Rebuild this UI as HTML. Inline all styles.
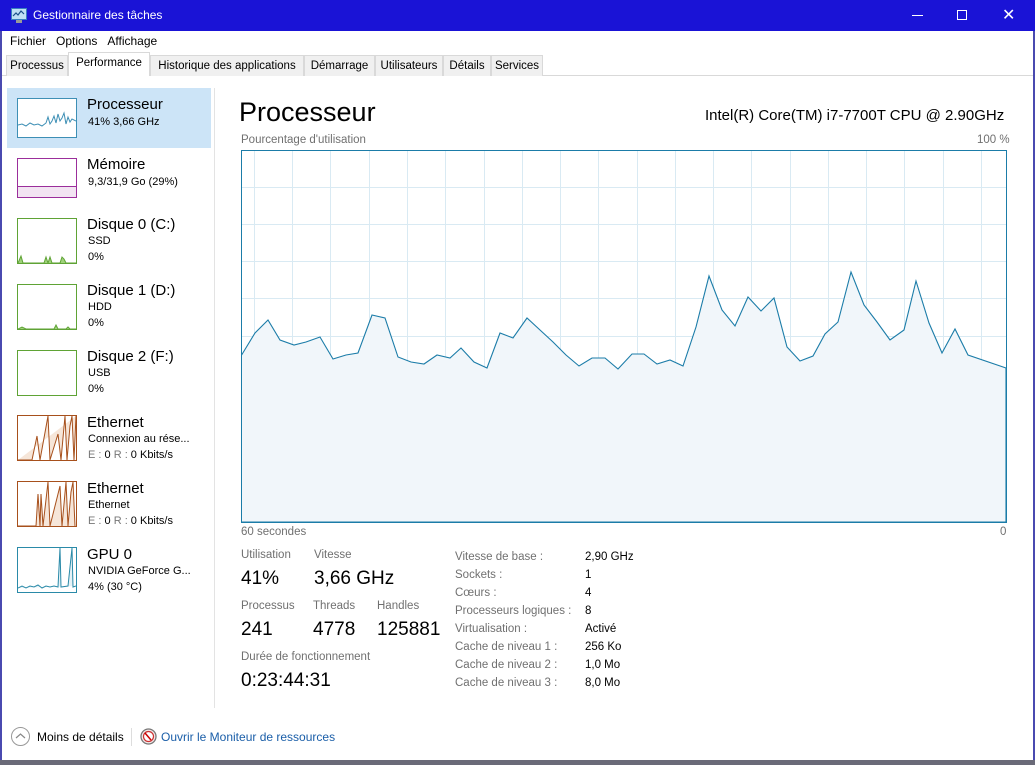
<!DOCTYPE html>
<html><head><meta charset="utf-8"><style>
*{margin:0;padding:0;box-sizing:border-box}
body{width:1035px;height:765px;overflow:hidden;background:#fff;font-family:"Liberation Sans",sans-serif;position:relative;color:#000}
.a{position:absolute;white-space:nowrap}
.title{left:0;top:0;width:1035px;height:31px;background:#1a13d6;color:#fff;font-size:12px}
.g{color:#777}
.tab{position:absolute;top:55px;height:21px;font-size:11.5px;line-height:20px;text-align:center;background:#f0f0f0;border:1px solid #d9d9d9;border-bottom:none}
.th{position:absolute;left:17px;width:60px;background:#fff}
.n{position:absolute;left:87px;font-size:15px}
.s{position:absolute;left:88px;font-size:11px;line-height:16px}
.lbl{font-size:11.5px;color:#707070}
.big{font-size:19px}
</style></head><body>
<div class="a title">
 <svg class="a" style="left:11px;top:8px" width="16" height="15" viewBox="0 0 16 15"><rect x="0.5" y="0.5" width="15" height="11" fill="#bfe0f5" stroke="#3a7fbf"/><polyline points="2,8 5,5 7,7 10,3 13,6" fill="none" stroke="#1a4f8a" stroke-width="1.2"/><rect x="5" y="12" width="6" height="3" fill="#999"/></svg>
 <span class="a" style="left:33px;top:8px">Gestionnaire des tâches</span>
 <div class="a" style="left:912px;top:15px;width:11px;height:1px;background:#fff"></div>
 <div class="a" style="left:957px;top:10px;width:10px;height:10px;border:1px solid #fff"></div>
 <span class="a" style="left:1002px;top:5px;font-size:16px">✕</span>
</div>
<div class="a" style="left:0;top:31px;width:2px;height:734px;background:#4a4ab0"></div>
<div class="a" style="left:1033px;top:31px;width:2px;height:734px;background:#4a4ab0"></div>
<div class="a" style="left:10px;top:34px;font-size:12px">Fichier&nbsp;&nbsp;&nbsp;Options&nbsp;&nbsp;&nbsp;Affichage</div>
<div class="a" style="left:2px;top:75px;width:1031px;height:1px;background:#d9d9d9"></div>
<div class="tab" style="left:6px;width:62px">Processus</div>
<div class="tab" style="left:68px;width:82px;top:52px;height:24px;background:#fff">Performance</div>
<div class="tab" style="left:150px;width:154px">Historique des applications</div>
<div class="tab" style="left:304px;width:71px">Démarrage</div>
<div class="tab" style="left:375px;width:68px">Utilisateurs</div>
<div class="tab" style="left:443px;width:48px">Détails</div>
<div class="tab" style="left:491px;width:52px">Services</div>

<div class="a" style="left:7px;top:88px;width:204px;height:60px;background:#cce4f7"></div>
<div class="a" style="left:214px;top:88px;width:1px;height:620px;background:#e3e3e3"></div>

<svg class="th" style="top:98px;height:40px;border:1px solid #3d8fb5" viewBox="0 0 58 38"><polyline points="0,26 4,25 8,27 12,24 16,26 20,25 24,27 28,24 30,18 32,25 34,22 36,17 38,24 40,15 42,22 44,19 46,14 48,25 50,18 52,23 54,20 58,22" fill="none" stroke="#3d8fb5" stroke-width="1"/></svg>
<div class="n" style="top:96px">Processeur</div><div class="s" style="top:114px">41% 3,66 GHz</div>

<div class="th" style="top:158px;height:40px;border:1px solid #9b2e9b"><div style="position:absolute;left:0;right:0;bottom:0;height:11px;background:#f2e4f2;border-top:1px solid #9b2e9b"></div></div>
<div class="n" style="top:156px">Mémoire</div><div class="s" style="top:174px">9,3/31,9 Go (29%)</div>

<svg class="th" style="top:218px;height:46px;border:1px solid #5fa335" viewBox="0 0 58 44"><polyline points="0,44 3,37 5,44 26,44 28,38 30,44 32,38 34,44 42,44 44,38 46,40 48,44 58,44" fill="#9fd27a" stroke="#5fa335"/></svg>
<div class="n" style="top:216px">Disque 0 (C:)</div><div class="s" style="top:233px">SSD<br>0%</div>

<svg class="th" style="top:284px;height:46px;border:1px solid #5fa335" viewBox="0 0 58 44"><polyline points="0,44 4,42 8,44 36,44 38,40 40,44 48,44 50,42 52,44 58,44" fill="#9fd27a" stroke="#5fa335"/></svg>
<div class="n" style="top:282px">Disque 1 (D:)</div><div class="s" style="top:299px">HDD<br>0%</div>

<div class="th" style="top:350px;height:46px;border:1px solid #5fa335"></div>
<div class="n" style="top:348px">Disque 2 (F:)</div><div class="s" style="top:365px">USB<br>0%</div>

<svg class="th" style="top:415px;height:46px;border:1px solid #a7501c" viewBox="0 0 58 44"><polyline points="0,44 14,44 19,20 22,44 30,0 32,44 40,18 43,44 47,0 49,44 52,10 54,0 56,44 58,0" fill="#f6e6d9" stroke="#a7501c"/></svg>
<div class="n" style="top:414px">Ethernet</div><div class="s" style="top:431px">Connexion au rése...<br><span class="g">E :</span> 0 <span class="g">R :</span> 0 Kbits/s</div>

<svg class="th" style="top:481px;height:46px;border:1px solid #a7501c" viewBox="0 0 58 44"><polyline points="0,44 18,44 20,12 22,44 23,12 25,44 30,0 32,44 42,4 44,44 48,0 50,44 53,10 55,0 57,44" fill="#f6e6d9" stroke="#a7501c"/></svg>
<div class="n" style="top:480px">Ethernet</div><div class="s" style="top:497px">Ethernet<br><span class="g">E :</span> 0 <span class="g">R :</span> 0 Kbits/s</div>

<svg class="th" style="top:547px;height:46px;border:1px solid #2a8aa8" viewBox="0 0 58 44"><polyline points="0,40 4,38 8,40 12,38 16,39 20,37 24,40 28,38 32,39 36,38 40,39 42,0 43,39 50,38 54,0 55,39 58,38" fill="#e6f2f7" stroke="#2a8aa8"/></svg>
<div class="n" style="top:546px">GPU 0</div><div class="s" style="top:563px">NVIDIA GeForce G...<br>4% (30 °C)</div>

<div class="a" style="left:239px;top:97px;font-size:27px">Processeur</div>
<div class="a" style="left:705px;top:107px;font-size:15px">Intel(R) Core(TM) i7-7700T CPU @ 2.90GHz</div>
<div class="a lbl" style="left:241px;top:134px">Pourcentage d'utilisation</div>
<div class="a lbl" style="left:977px;top:134px">100 %</div>
<svg class="a" style="left:241px;top:150px" width="766" height="373" viewBox="241 150 766 373">
<g stroke="#d9eaf3" stroke-width="1">
<path d="M254.5 150V522M292.5 150V522M330.5 150V522M369.5 150V522M407.5 150V522M445.5 150V522M484.5 150V522M522.5 150V522M560.5 150V522M598.5 150V522M637.5 150V522M675.5 150V522M713.5 150V522M751.5 150V522M790.5 150V522M828.5 150V522M866.5 150V522M904.5 150V522M943.5 150V522M981.5 150V522"/>
<path d="M241 187.5H1006M241 224.5H1006M241 261.5H1006M241 298.5H1006M241 336.5H1006M241 373.5H1006M241 410.5H1006M241 447.5H1006M241 484.5H1006"/>
</g>
<polygon fill="#f1f6fa" stroke="#1b7ca8" stroke-width="1.1" points="241,522 241,356 255,333 268,320 280,340 294,345 306,342 320,337 333,359 346,355 358,353 372,315 385,318 398,357 411,362 424,364 437,355 450,358 461,348 474,362 487,368 500,333 513,338 527,318 540,330 553,342 566,355 579,366 592,358 605,358 618,369 632,354 644,354 657,364 670,360 683,366 696,327 709,276 722,310 735,326 748,297 761,311 774,298 787,347 800,361 813,356 825,334 838,322 851,272 864,305 877,322 890,340 904,330 916,281 929,323 942,353 955,329 968,355 1006,368 1006,522"/>
<rect x="241.5" y="150.5" width="765" height="372" fill="none" stroke="#1b7ca8"/>
</svg>
<div class="a lbl" style="left:241px;top:526px">60 secondes</div>
<div class="a lbl" style="left:1000px;top:526px">0</div>

<div class="a lbl" style="left:241px;top:549px">Utilisation</div><div class="a lbl" style="left:314px;top:549px">Vitesse</div>
<div class="a big" style="left:241px;top:568px">41%</div><div class="a big" style="left:314px;top:568px">3,66 GHz</div>
<div class="a lbl" style="left:241px;top:600px">Processus</div><div class="a lbl" style="left:313px;top:600px">Threads</div><div class="a lbl" style="left:377px;top:600px">Handles</div>
<div class="a big" style="left:241px;top:619px">241</div><div class="a big" style="left:313px;top:619px">4778</div><div class="a big" style="left:377px;top:619px">125881</div>
<div class="a lbl" style="left:241px;top:651px">Durée de fonctionnement</div>
<div class="a big" style="left:241px;top:670px">0:23:44:31</div>

<div class="a lbl" style="left:455px;top:548px;line-height:18px">Vitesse de base :<br>Sockets :<br>Cœurs :<br>Processeurs logiques :<br>Virtualisation :<br>Cache de niveau 1 :<br>Cache de niveau 2 :<br>Cache de niveau 3 :</div>
<div class="a" style="left:585px;top:548px;line-height:18px;font-size:11.5px">2,90 GHz<br>1<br>4<br>8<br>Activé<br>256 Ko<br>1,0 Mo<br>8,0 Mo</div>

<div class="a" style="left:11px;top:727px;width:19px;height:19px;border:1px solid #999;border-radius:50%"></div>
<svg class="a" style="left:15px;top:732px" width="11" height="8"><polyline points="1,6 5.5,2 10,6" fill="none" stroke="#888" stroke-width="1.2"/></svg>
<div class="a" style="left:37px;top:730px;font-size:12px">Moins de détails</div>
<div class="a" style="left:131px;top:728px;width:1px;height:18px;background:#ddd"></div>
<svg class="a" style="left:140px;top:728px" width="17" height="17"><circle cx="8.5" cy="8.5" r="7.5" fill="#f3e7e7" stroke="#777" stroke-width="1.3"/><circle cx="8.5" cy="8.5" r="5" fill="#fff" stroke="#c33" stroke-width="1.2"/><line x1="5" y1="5" x2="11" y2="12" stroke="#c00" stroke-width="1.5"/></svg>
<div class="a" style="left:161px;top:730px;font-size:12px;color:#1a5ea8">Ouvrir le Moniteur de ressources</div>
<div class="a" style="left:0;top:760px;width:1035px;height:5px;background:#6a6a78"></div>
</body></html>
